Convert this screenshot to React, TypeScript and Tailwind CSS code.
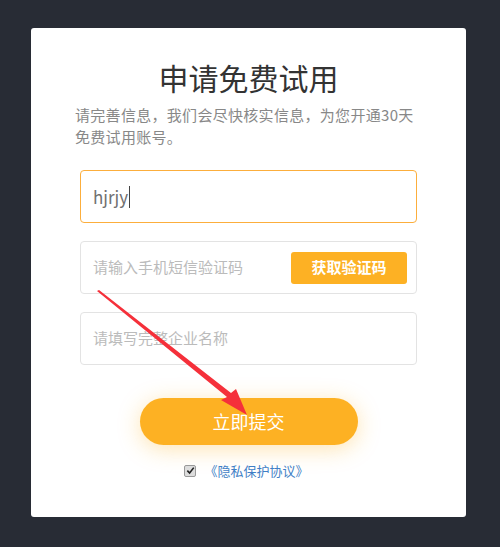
import React from 'react';

const font = { fontFamily: '"Noto Sans CJK SC", "Noto Sans", sans-serif' };

function RedArrow() {
  // annotation arrow drawn over the form
  return (
    <svg
      className="pointer-events-none absolute left-0 top-0"
      width="500"
      height="547"
      viewBox="0 0 500 547"
    >
      <polygon
        points="97,291 99,290 231,393 236,389 247,415 221,400 227,397"
        fill="#f5303a"
      />
    </svg>
  );
}

export default function App() {
  return (
    <div
      className="relative h-[547px] w-[500px] bg-[#282c35] pl-[31px] pt-[28px]"
      style={font}
    >
      <div className="flex h-[489px] w-[435px] flex-col rounded-[3px] bg-white px-[44px]">
        <h1 className="mt-[29px] text-center text-[30px] leading-[40px] text-[#333]">
          申请免费试用
        </h1>
        <p className="mt-[7px] w-[345px] text-[15px] leading-[22px] tracking-[0.3px] text-[#888]">
          请完善信息，我们会尽快核实信息，为您开通30天免费试用账号。
        </p>

        <div className="mt-[22px] flex flex-col gap-[18px] px-[5px]">
          <div className="flex h-[53px] items-center rounded-[4px] border border-[#fcae3c] px-[12px]">
            <span className="text-[17px] text-[#707070]">hjrjy</span>
            <span className="ml-[1px] h-[22px] w-px bg-[#444]" />
          </div>

          <div className="flex h-[53px] items-center justify-between rounded-[4px] border border-[#e3e3e3] pl-[12px] pr-[9px]">
            <span className="text-[15px] text-[#bbb]">请输入手机短信验证码</span>
            <button className="flex h-[32px] w-[116px] items-center justify-center rounded-[3px] bg-[#fdb124] text-[15px] font-bold text-white">
              获取验证码
            </button>
          </div>

          <div className="flex h-[53px] items-center rounded-[4px] border border-[#e3e3e3] px-[12px]">
            <span className="text-[15px] text-[#bbb]">请填写完整企业名称</span>
          </div>
        </div>

        <div className="mt-[33px] flex justify-center">
          <button className="flex h-[47px] w-[218px] items-center justify-center rounded-full bg-[#fdb123] text-[18px] text-white shadow-[0_4px_22px_rgba(253,177,35,0.35)]">
            立即提交
          </button>
        </div>

        <div className="mt-[16px] flex items-center justify-center gap-[8px] pr-[4px]">
          <span className="flex h-[12px] w-[12px] items-center justify-center rounded-[2px] border border-[#999] bg-[#ddd]">
            <svg width="9" height="9" viewBox="0 0 10 10">
              <path d="M1.5 5.2 L4 7.8 L8.6 1.8" fill="none" stroke="#222" strokeWidth="1.8" />
            </svg>
          </span>
          <span className="text-[13px] text-[#3f7fc6]">《隐私保护协议》</span>
        </div>
      </div>
      <RedArrow />
    </div>
  );
}
